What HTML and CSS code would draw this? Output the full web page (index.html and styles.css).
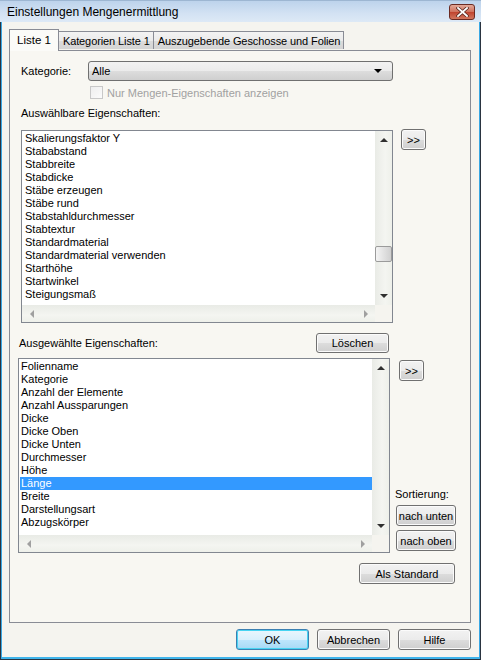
FILE: index.html
```html
<!DOCTYPE html>
<html lang="de">
<head>
    <meta charset="UTF-8">
    <title>Einstellungen Mengenermittlung</title>
    <link rel="stylesheet" href="styles.css">
</head>
<body>

    <div class="window">
        <div class="titlebar">
            <span class="title">Einstellungen Mengenermittlung</span>
            <div class="close-btn">
                <svg width="13" height="10" viewBox="0 0 13 10">
                    <path d="M2 1 L11 9 M11 1 L2 9" stroke="#5a2a22" stroke-width="3.4" stroke-linecap="square"/>
                    <path d="M2 1 L11 9 M11 1 L2 9" stroke="#ffffff" stroke-width="1.8" stroke-linecap="square"/>
                </svg>
            </div>
        </div>

        <div class="client">
            <div class="tabs">
                <div class="tab active">Liste 1</div>
                <div class="tab">Kategorien Liste 1</div>
                <div class="tab">Auszugebende Geschosse und Folien</div>
            </div>

            <div class="panel">
                <div class="row-kategorie">
                    <span class="label-kat">Kategorie:</span>
                    <div class="combo">
                        <span>Alle</span>
                        <span class="combo-arrow"></span>
                    </div>
                </div>

                <div class="row-check">
                    <span class="checkbox"></span>
                    <span class="disabled-text">Nur Mengen-Eigenschaften anzeigen</span>
                </div>

                <div class="caption caption-avail">Auswählbare Eigenschaften:</div>

                <div class="row-list1">
                    <div class="listbox">
                        <div class="items">
                            <div class="item">Skalierungsfaktor Y</div>
                            <div class="item">Stababstand</div>
                            <div class="item">Stabbreite</div>
                            <div class="item">Stabdicke</div>
                            <div class="item">Stäbe erzeugen</div>
                            <div class="item">Stäbe rund</div>
                            <div class="item">Stabstahldurchmesser</div>
                            <div class="item">Stabtextur</div>
                            <div class="item">Standardmaterial</div>
                            <div class="item">Standardmaterial verwenden</div>
                            <div class="item">Starthöhe</div>
                            <div class="item">Startwinkel</div>
                            <div class="item">Steigungsmaß</div>
                        </div>
                        <div class="vscroll">
                            <span class="arr-up"></span>
                            <div class="track">
                                <div class="thumb thumb-1"></div>
                            </div>
                            <span class="arr-down"></span>
                        </div>
                        <div class="hscroll">
                            <span class="arr-left"></span>
                            <span class="arr-right"></span>
                        </div>
                        <div class="corner"></div>
                    </div>
                    <button class="btn btn-move">&gt;&gt;</button>
                </div>

                <div class="row-selected-head">
                    <span class="caption">Ausgewählte Eigenschaften:</span>
                    <button class="btn btn-loeschen">Löschen</button>
                </div>

                <div class="row-list2">
                    <div class="listbox listbox-2">
                        <div class="items">
                            <div class="item">Folienname</div>
                            <div class="item">Kategorie</div>
                            <div class="item">Anzahl der Elemente</div>
                            <div class="item">Anzahl Aussparungen</div>
                            <div class="item">Dicke</div>
                            <div class="item">Dicke Oben</div>
                            <div class="item">Dicke Unten</div>
                            <div class="item">Durchmesser</div>
                            <div class="item">Höhe</div>
                            <div class="item selected">Länge</div>
                            <div class="item">Breite</div>
                            <div class="item">Darstellungsart</div>
                            <div class="item">Abzugskörper</div>
                        </div>
                        <div class="vscroll">
                            <span class="arr-up"></span>
                            <div class="track"></div>
                            <span class="arr-down"></span>
                        </div>
                        <div class="hscroll">
                            <span class="arr-left"></span>
                            <span class="arr-right"></span>
                        </div>
                        <div class="corner"></div>
                    </div>

                    <div class="side-col">
                        <button class="btn btn-move">&gt;&gt;</button>
                        <div class="sort-group">
                            <div class="sort-label">Sortierung:</div>
                            <button class="btn btn-sort">nach unten</button>
                            <button class="btn btn-sort">nach oben</button>
                        </div>
                    </div>
                </div>

                <div class="row-standard">
                    <button class="btn btn-standard">Als Standard</button>
                </div>
            </div>

            <div class="footer">
                <button class="btn btn-footer btn-default">OK</button>
                <button class="btn btn-footer">Abbrechen</button>
                <button class="btn btn-footer">Hilfe</button>
            </div>
        </div>
    </div>

</body>
</html>
```

FILE: styles.css
```css
body {
    margin: 0;
    font-family: 'Liberation Sans', Arial, sans-serif;
    font-size: 11px;
    color: #000000;
    background: #ffffff;
}

.window {
    width: 481px;
    height: 660px;
    box-sizing: border-box;
    border: 1px solid #2a3440;
    border-top: none;
    background-color: #f5f4ef;
    box-shadow: inset 1px 0 0 #3aa8e4, inset -1px 0 0 #3aa8e4, inset 0 -2px 0 #3fb4ea;
    display: flex;
    flex-direction: column;
}

/* Titelleiste */
.titlebar {
    height: 22px;
    margin: 0 -1px;
    background: linear-gradient(to bottom, #bdd3ec, #d3e2f3 60%, #dde9f6);
    border-top: 1px solid #9db6d2;
    box-sizing: border-box;
    display: flex;
    align-items: center;
    justify-content: space-between;
    padding: 0 6px 0 7px;
}

.title {
    color: #000000;
    font-size: 12px;
    padding-top: 1px;
}

.close-btn {
    width: 24px;
    height: 14px;
    border: 1px solid #6b2a22;
    border-radius: 3px;
    background: linear-gradient(to bottom, #e2a898, #d0705c 50%, #c0432e 51%, #d2765e);
    display: flex;
    align-items: center;
    justify-content: center;
    margin-top: 1px;
}

.client {
    flex: 1;
    padding: 7px 9px 0 8px;
    display: flex;
    flex-direction: column;
}

/* Register */
.tabs {
    display: flex;
    align-items: flex-end;
    height: 21px;
    position: relative;
    z-index: 1;
}

.tab {
    height: 18px;
    box-sizing: border-box;
    border: 1px solid #898c95;
    border-bottom: none;
    border-left: none;
    padding: 0 3px 0 4px;
    line-height: 18px;
    font-size: 11px;
    letter-spacing: -0.1px;
    background: linear-gradient(to bottom, #f3f3f3, #ebebeb 50%, #dcdcdc 51%, #d4d4d4);
    margin-bottom: 1px;
}

.tab:nth-child(2) {
    border-left: 1px solid #898c95;
}

.tab.active {
    height: 22px;
    border-left: 1px solid #898c95;
    border-right: 1px solid #898c95;
    background: #fbfbf8;
    padding: 0 7px 0 7px;
    line-height: 20px;
    font-size: 11.5px;
    letter-spacing: 0;
    margin-bottom: -1px;
}

.tab.active + .tab {
    border-left: none;
}

.panel {
    height: 573px;
    box-sizing: border-box;
    border: 1px solid #898c95;
    background-color: #f8f7f2;
    padding: 0 0 0 8px;
    display: flex;
    flex-direction: column;
}

/* Kategorie */
.row-kategorie {
    display: flex;
    align-items: center;
    margin-top: 10px;
    height: 20px;
}

.label-kat {
    width: 70px;
    padding-left: 3px;
    box-sizing: border-box;
}

.combo {
    width: 305px;
    height: 20px;
    box-sizing: border-box;
    border: 1px solid #707070;
    border-radius: 3px;
    background: linear-gradient(to bottom, #f2f2f2, #ebebeb 50%, #dddddd 51%, #cfcfcf);
    display: flex;
    align-items: center;
    justify-content: space-between;
    padding: 0 10px 0 3px;
}

.combo-arrow {
    width: 0;
    height: 0;
    border-left: 4px solid transparent;
    border-right: 4px solid transparent;
    border-top: 4px solid #000000;
}

.row-check {
    display: flex;
    align-items: center;
    margin-top: 5px;
    padding-left: 72px;
    height: 13px;
}

.checkbox {
    width: 13px;
    height: 13px;
    box-sizing: border-box;
    border: 1px solid #c8c8c8;
    background: linear-gradient(135deg, #eeeeee, #fbfbfb);
    margin-right: 4px;
}

.disabled-text {
    color: #a1a1a1;
}

.caption {
    height: 13px;
    line-height: 13px;
}

.caption-avail {
    margin-top: 8px;
    padding-left: 3px;
}

/* Listen */
.row-list1 {
    display: flex;
    align-items: flex-start;
    margin-top: 10px;
    padding-left: 3px;
}

.listbox {
    width: 372px;
    height: 193px;
    box-sizing: border-box;
    border: 1px solid #828790;
    background-color: #ffffff;
    display: grid;
    grid-template-columns: 1fr 17px;
    grid-template-rows: 1fr 17px;
    overflow: hidden;
}

.listbox-2 {
    height: 195px;
}

.items {
    overflow: hidden;
    padding-top: 1px;
}

.item {
    height: 13px;
    line-height: 13px;
    padding-left: 3px;
    white-space: nowrap;
}

.listbox-2 .item {
    padding-left: 2px;
}

.item.selected {
    background-color: #3399ff;
    color: #ffffff;
    margin-left: 1px;
    padding-left: 1px;
}

.vscroll {
    background: linear-gradient(to right, #e9ebe6, #f4f5f1 60%, #eef0ea);
    display: flex;
    flex-direction: column;
    align-items: center;
}

.track {
    flex: 1;
    width: 100%;
    position: relative;
}

.thumb {
    position: absolute;
    left: 0;
    width: 15px;
    height: 14px;
    border: 1px solid #9b9b9b;
    border-radius: 2px;
    background: linear-gradient(to right, #f4f4f4, #e2e2e2 50%, #d0d0d0);
}

.thumb-1 {
    top: 99px;
}

.arr-up {
    margin: 7px 0 5px;
    width: 0;
    height: 0;
    border-left: 4px solid transparent;
    border-right: 4px solid transparent;
    border-bottom: 4px solid #303030;
}

.arr-down {
    margin: 5px 0 7px;
    width: 0;
    height: 0;
    border-left: 4px solid transparent;
    border-right: 4px solid transparent;
    border-top: 4px solid #303030;
}

.hscroll {
    background: linear-gradient(to bottom, #e9ebe6, #f4f5f1 60%, #eef0ea);
    display: flex;
    align-items: center;
    justify-content: space-between;
    padding: 0 7px 0 8px;
}

.arr-left {
    width: 0;
    height: 0;
    border-top: 4px solid transparent;
    border-bottom: 4px solid transparent;
    border-right: 4px solid #a0a0a0;
}

.arr-right {
    width: 0;
    height: 0;
    border-top: 4px solid transparent;
    border-bottom: 4px solid transparent;
    border-left: 4px solid #a0a0a0;
}

.corner {
    background-color: #f5f4ef;
}

/* Schaltflächen */
.btn {
    font-family: 'Liberation Sans', Arial, sans-serif;
    font-size: 11px;
    color: #000000;
    height: 21px;
    box-sizing: border-box;
    border: 1px solid #707070;
    border-radius: 3px;
    background: linear-gradient(to bottom, #f2f2f2, #ebebeb 50%, #dddddd 51%, #cfcfcf);
    padding: 0;
    box-shadow: inset 0 0 0 1px #fbfbfb;
}

.btn-move {
    width: 25px;
    margin-left: 8px;
    margin-top: -1px;
}

.row-selected-head {
    display: flex;
    align-items: center;
    justify-content: space-between;
    width: 371px;
    margin-top: 10px;
    padding-left: 1px;
    box-sizing: border-box;
}

.btn-loeschen {
    width: 73px;
    height: 20px;
}

.row-list2 {
    display: flex;
    align-items: stretch;
    margin-top: 5px;
}

.side-col {
    display: flex;
    flex-direction: column;
    justify-content: space-between;
    margin-left: 1px;
}

.side-col .btn-move {
    margin-top: 2px;
}

.sort-group {
    display: flex;
    flex-direction: column;
    gap: 4px;
    margin-bottom: 2px;
}

.sort-label {
    padding-left: 4px;
    margin-bottom: 1px;
}

.btn-sort {
    width: 60px;
    margin-left: 5px;
}

.row-standard {
    display: flex;
    justify-content: flex-end;
    width: 437px;
    margin-top: 10px;
}

.btn-standard {
    width: 96px;
}

.footer {
    display: flex;
    justify-content: flex-end;
    gap: 8px;
    margin-top: 6px;
}

.btn-footer {
    width: 73px;
}

.btn-default {
    border-color: #3c7fb1;
    background: linear-gradient(to bottom, #eaf6fd, #d9f0fc 50%, #bee6fd 51%, #a7d9f5);
    box-shadow: inset 0 0 0 1px #48d4f2;
}
```
